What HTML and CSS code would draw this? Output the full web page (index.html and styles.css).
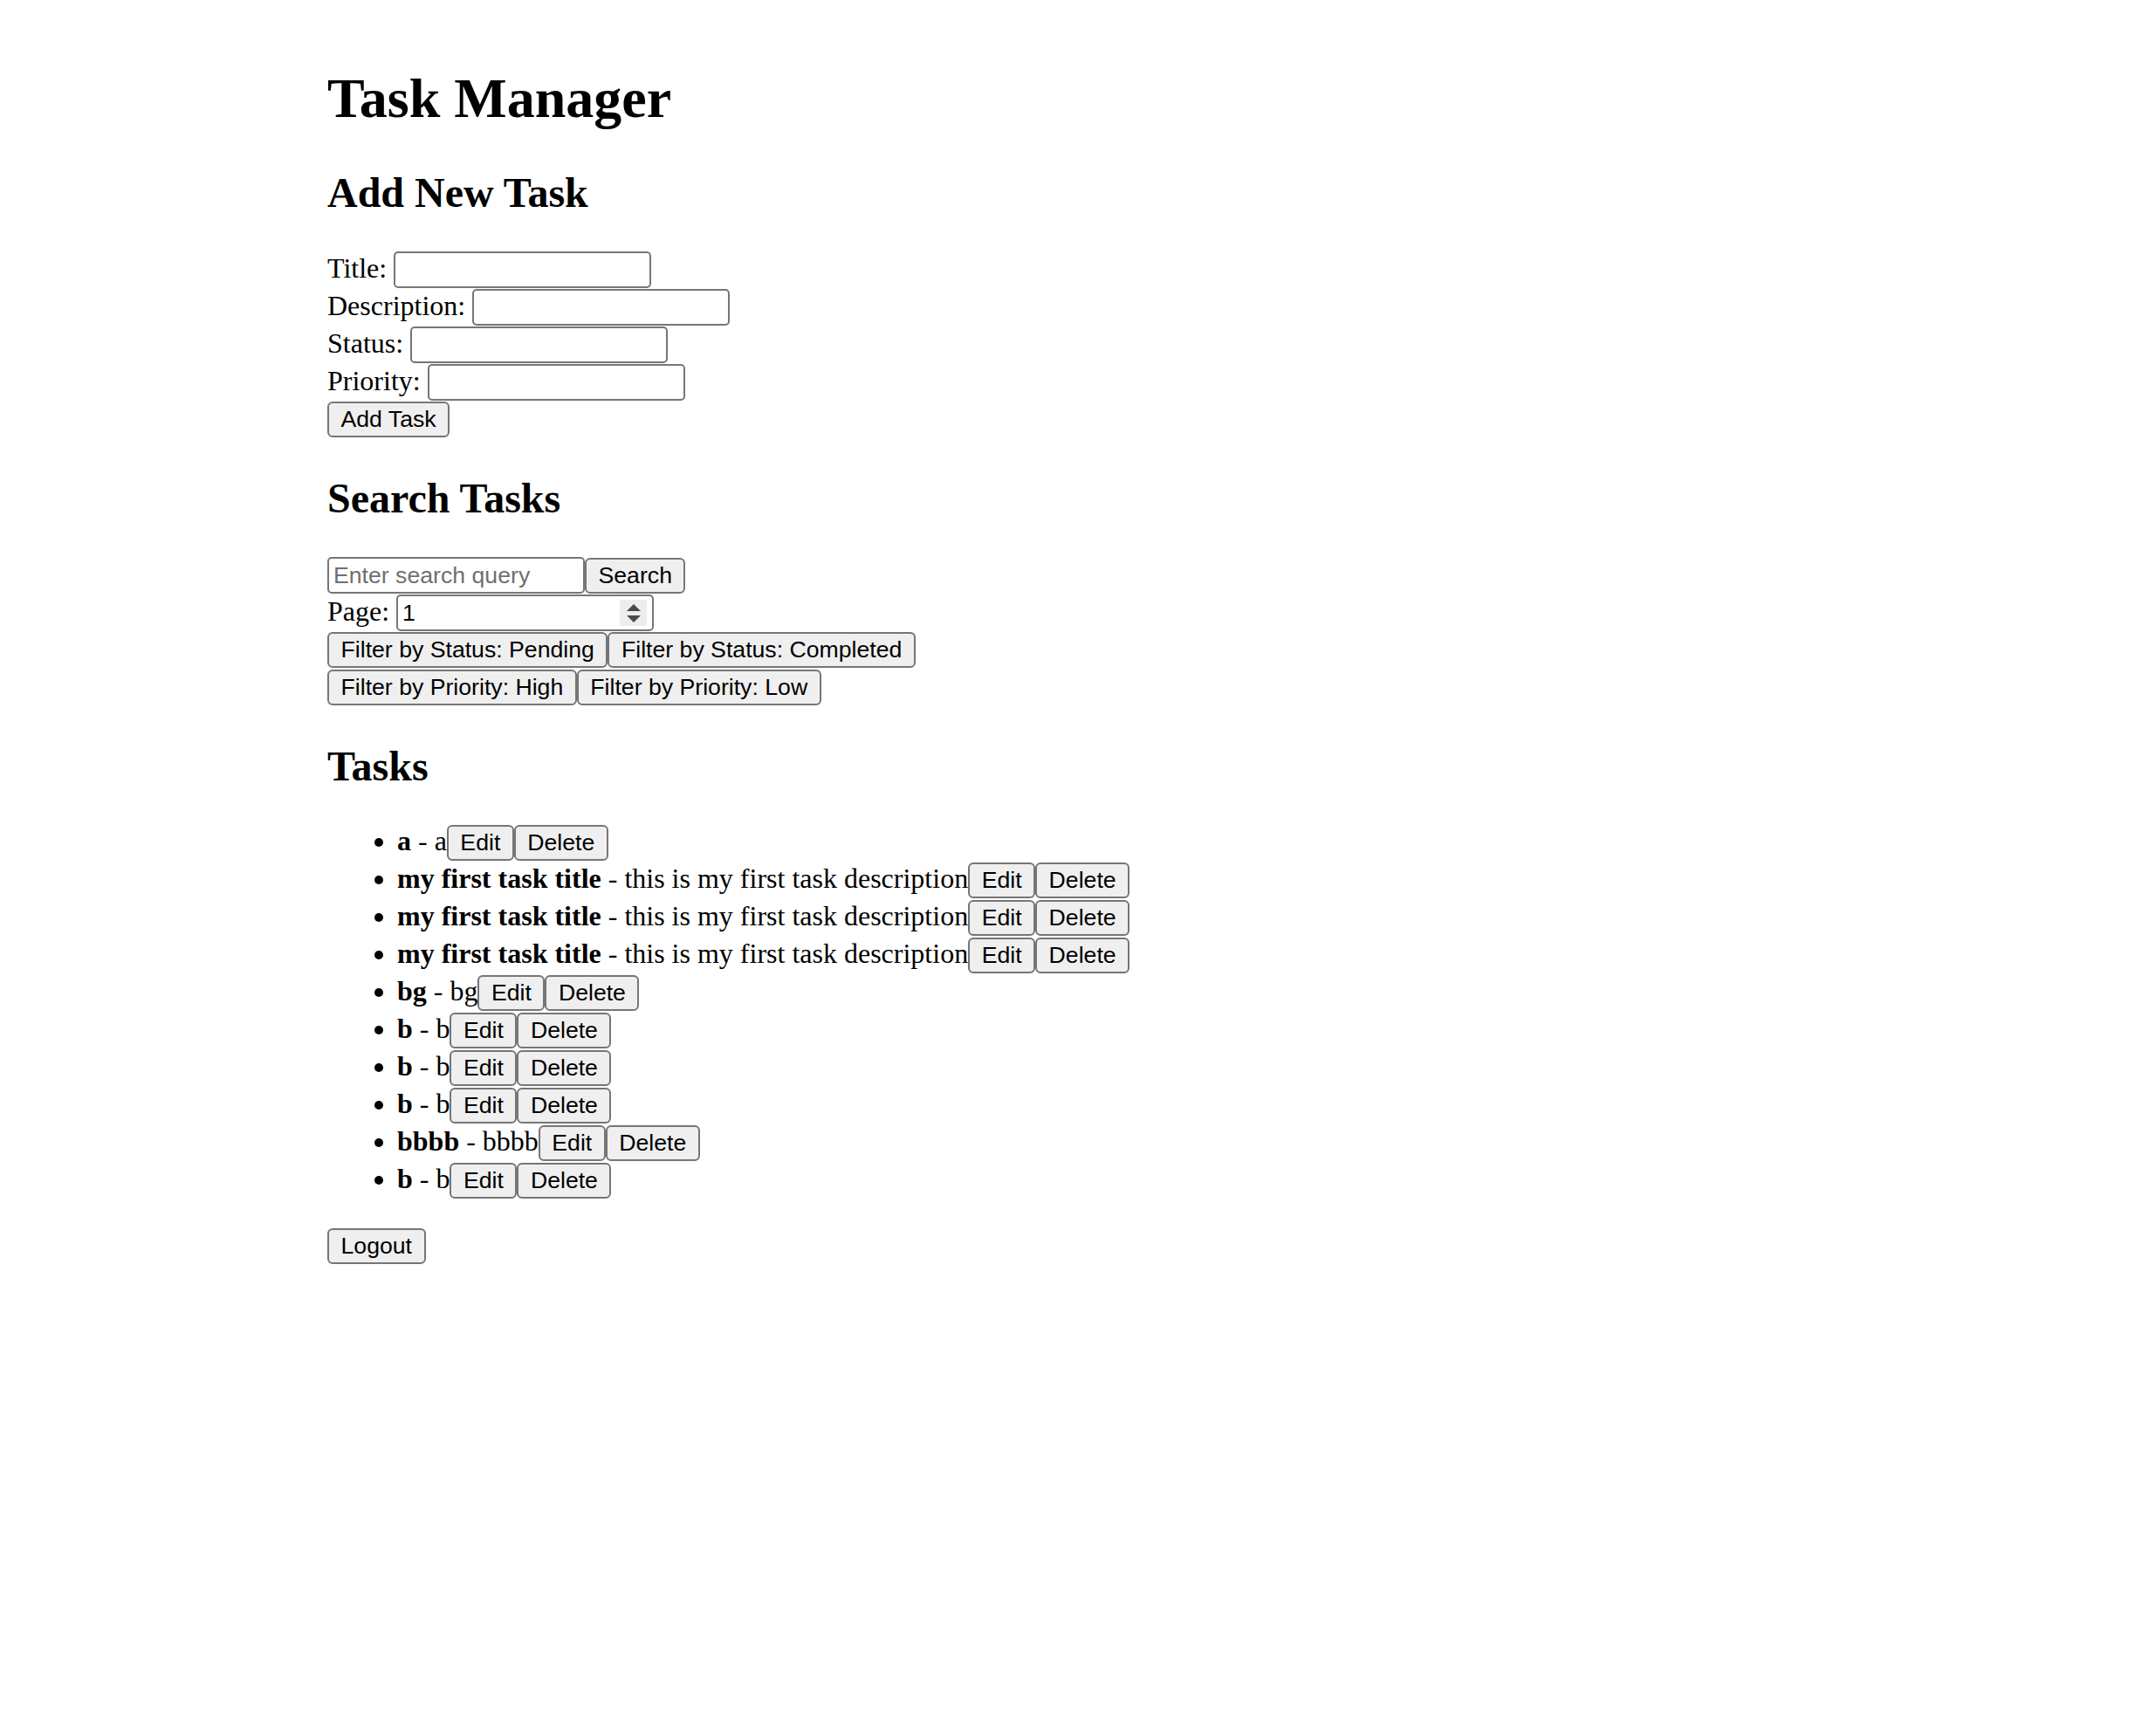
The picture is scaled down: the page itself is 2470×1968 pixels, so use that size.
FILE: index.html
```html
<!DOCTYPE html>
<html lang="en">
<head>
<meta charset="utf-8">
<title>Task Manager</title>
<link rel="stylesheet" href="styles.css">
</head>
<body>
<div class="app">
  <h1 class="title">Task Manager</h1>

  <h2 class="section-title">Add New Task</h2>
  <form class="task-form">
    <div class="field">Title: <input class="text-input" type="text"></div>
    <div class="field">Description: <input class="text-input" type="text"></div>
    <div class="field">Status: <input class="text-input" type="text"></div>
    <div class="field">Priority: <input class="text-input" type="text"></div>
    <div class="field"><button class="btn" type="button">Add Task</button></div>
  </form>

  <h2 class="section-title">Search Tasks</h2>
  <div class="search">
    <div class="field"><input class="text-input" type="text" placeholder="Enter search query"><button class="btn" type="button">Search</button></div>
    <div class="field">Page: <span class="number-wrap"><input class="text-input" type="text" value="1"><span class="spinner"><span class="arrow-up"></span><span class="arrow-down"></span></span></span></div>
    <div class="field"><button class="btn" type="button">Filter by Status: Pending</button><button class="btn" type="button">Filter by Status: Completed</button></div>
    <div class="field"><button class="btn" type="button">Filter by Priority: High</button><button class="btn" type="button">Filter by Priority: Low</button></div>
  </div>

  <h2 class="section-title">Tasks</h2>
  <ul class="task-list">
    <li class="task"><strong>a</strong> - a<button class="btn" type="button">Edit</button><button class="btn" type="button">Delete</button></li>
    <li class="task"><strong>my first task title</strong> - this is my first task description<button class="btn" type="button">Edit</button><button class="btn" type="button">Delete</button></li>
    <li class="task"><strong>my first task title</strong> - this is my first task description<button class="btn" type="button">Edit</button><button class="btn" type="button">Delete</button></li>
    <li class="task"><strong>my first task title</strong> - this is my first task description<button class="btn" type="button">Edit</button><button class="btn" type="button">Delete</button></li>
    <li class="task"><strong>bg</strong> - bg<button class="btn" type="button">Edit</button><button class="btn" type="button">Delete</button></li>
    <li class="task"><strong>b</strong> - b<button class="btn" type="button">Edit</button><button class="btn" type="button">Delete</button></li>
    <li class="task"><strong>b</strong> - b<button class="btn" type="button">Edit</button><button class="btn" type="button">Delete</button></li>
    <li class="task"><strong>b</strong> - b<button class="btn" type="button">Edit</button><button class="btn" type="button">Delete</button></li>
    <li class="task"><strong>bbbb</strong> - bbbb<button class="btn" type="button">Edit</button><button class="btn" type="button">Delete</button></li>
    <li class="task"><strong>b</strong> - b<button class="btn" type="button">Edit</button><button class="btn" type="button">Delete</button></li>
  </ul>

  <button class="btn" type="button">Logout</button>
</div>
</body>
</html>
```
FILE: styles.css
```css
html, body {
  margin: 0;
  padding: 0;
  background: #fff;
}

body {
  font-family: "Liberation Serif", "Times New Roman", serif;
  font-size: 32px;
  color: #000;
}

.app {
  width: 1720px;
  margin: 0 auto;
  padding-top: 1px;
}

.title {
  font-size: 64px;
  line-height: 74px;
  font-weight: bold;
  margin: 75px 0 43px;
}

.section-title {
  font-size: 48px;
  line-height: 55px;
  font-weight: bold;
  margin: 40px 0;
}

.task-form,
.search {
  margin: 0;
}

.field {
  height: 43px;
  white-space: nowrap;
}

.text-input {
  box-sizing: border-box;
  width: 295px;
  height: 42px;
  padding: 2px 5px;
  border: 2px solid #767676;
  border-radius: 5px;
  background: #fff;
  font-family: "Liberation Sans", Arial, sans-serif;
  font-size: 26.667px;
  color: #000;
  vertical-align: baseline;
  margin: 0;
}

.text-input::placeholder {
  color: #6f6f6f;
}

.btn {
  box-sizing: border-box;
  height: 41px;
  padding: 0 13.5px;
  border: 2px solid #767676;
  border-radius: 6px;
  background: #efefef;
  font-family: "Liberation Sans", Arial, sans-serif;
  font-size: 26.667px;
  color: #000;
  margin: 0;
}

.number-wrap {
  position: relative;
  display: inline-block;
}

.spinner {
  position: absolute;
  right: 8px;
  top: 6px;
  width: 31px;
  height: 30px;
  background: #ededed;
  display: flex;
  flex-direction: column;
  align-items: center;
  justify-content: center;
  gap: 5px;
}

.arrow-up {
  width: 0;
  height: 0;
  border-left: 8px solid transparent;
  border-right: 8px solid transparent;
  border-bottom: 8px solid #4a4a4a;
}

.arrow-down {
  width: 0;
  height: 0;
  border-left: 8px solid transparent;
  border-right: 8px solid transparent;
  border-top: 8px solid #4a4a4a;
}

.task-list {
  margin: 40px 0 32px;
  padding-left: 80px;
}

.task {
  height: 43px;
  white-space: nowrap;
}
```
